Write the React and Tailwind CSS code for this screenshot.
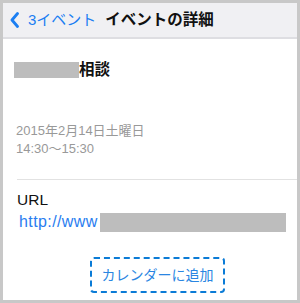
export default function App() {
  return (
    <div className="w-[300px] h-[303px] border-[3px] border-[#c8c8c8] bg-white overflow-hidden [font-family:'Liberation_Sans','Noto_Sans_CJK_JP',sans-serif]">
      <div className="h-[36px] bg-[#f0f0f3] border-b-[2px] border-[#dedee2] flex items-center">
        <svg width="10" height="16" viewBox="0 0 10 16" className="ml-[7px]">
          <polyline points="7.5,1.5 2,8 7.5,14.5" fill="none" stroke="#1b7ef2" strokeWidth="2.8" strokeLinecap="round" strokeLinejoin="round" />
        </svg>
        <span className="ml-[8px] text-[15px] leading-[20px] text-[#1b7ef2]">3イベント</span>
        <span className="ml-[9px] text-[15.5px] leading-[20px] font-bold text-[#111]">イベントの詳細</span>
      </div>
      <div className="mt-[21px] pl-[11px] flex items-center h-[20px]">
        <div className="w-[65px] h-[16px] bg-[#bdbdbd]" />
        <span className="text-[15.5px] leading-[20px] font-bold text-[#111]">相談</span>
      </div>
      <div className="mt-[42px] pl-[13px] text-[13px] leading-[18px] text-[#999]">
        <div>2015年2月14日土曜日</div>
        <div>14:30〜15:30</div>
      </div>
      <div className="mt-[21px] ml-[14px] h-px bg-[#e2e2e2]" />
      <div className="mt-[10px] pl-[14px] text-[15.5px] leading-[20px] text-[#111]">URL</div>
      <div className="mt-[2px] pl-[16px] flex items-center h-[20px]">
        <span className="text-[16px] leading-[20px] tracking-[0.4px] text-[#2a7df0]">http://www</span>
        <div className="ml-[2px] w-[186px] h-[19px] bg-[#bdbdbd]" />
      </div>
      <div className="mt-[25px] ml-[87px] w-[135px] h-[36px] border-[2px] border-dashed border-[#0a7bd6] rounded-[4px] flex items-center justify-center">
        <span className="text-[14px] leading-[20px] text-[#2a86e2]">カレンダーに追加</span>
      </div>
    </div>
  );
}
